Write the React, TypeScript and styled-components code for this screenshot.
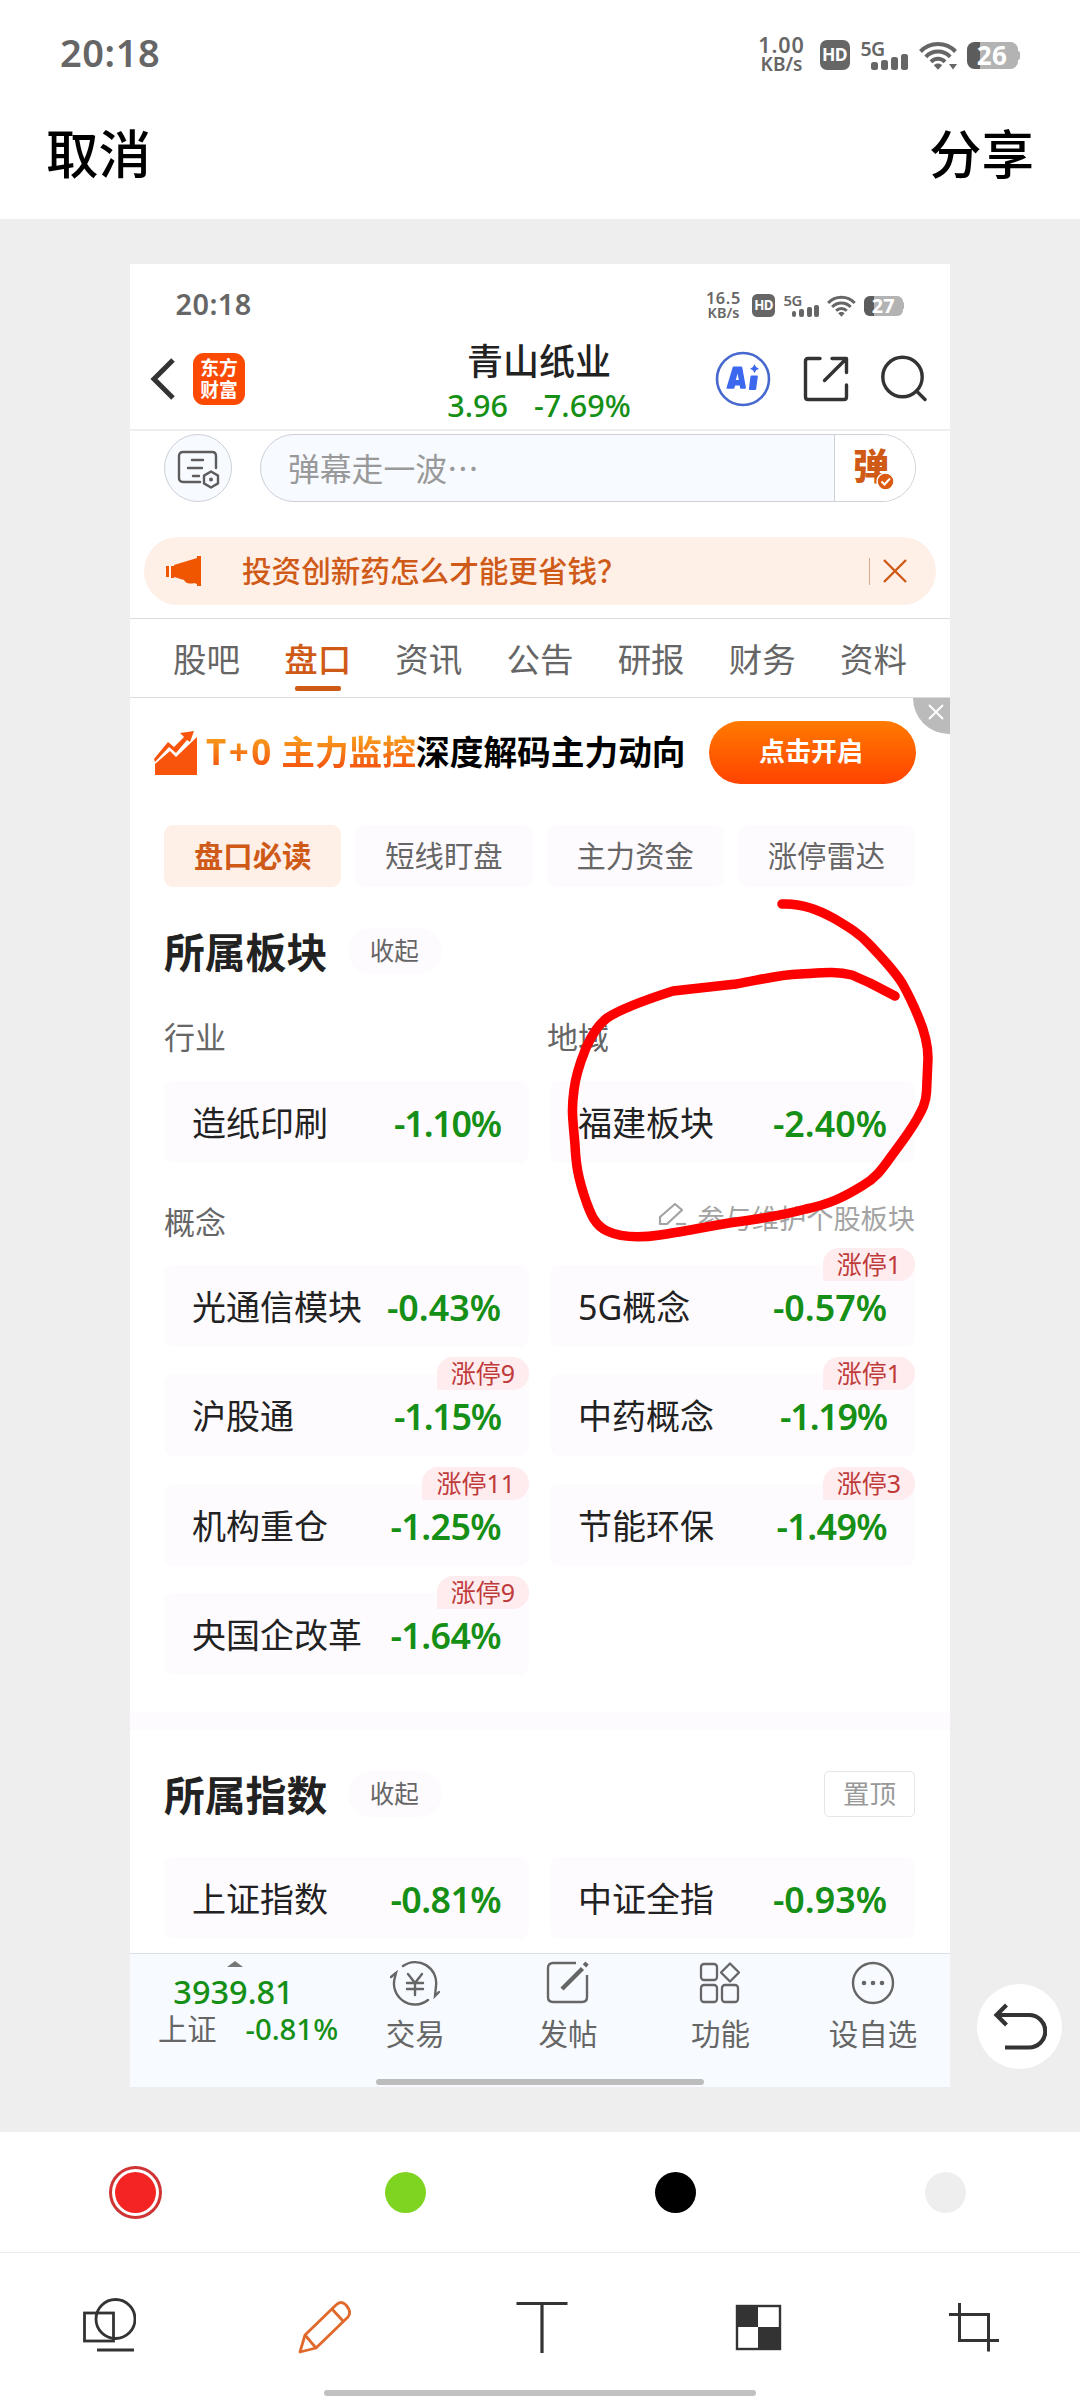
import React from "react";
import styled, { createGlobalStyle } from "styled-components";

const GREEN = "#158f15";
const ORANGE = "#cf5a17";
const INK = "#222";
const GRAY = "#666";

const GlobalStyle = createGlobalStyle`
  * { box-sizing: border-box; }
  body {
    margin: 0;
    background: #fff;
    font-family: "Noto Sans", "Noto Sans CJK SC", sans-serif;
  }
  svg { display: block; flex: none; }
`;

const Screen = styled.div`
  width: 1080px;
  height: 2400px;
  display: flex;
  flex-direction: column;
  background: #fff;
  overflow: hidden;
`;

/* ---------- status bar: every length is in em so that it scales ---------- */

const StatusRow = styled.div<{ $unit: number }>`
  font-size: ${(p) => p.$unit}px;
  height: 8.6em;
  padding: 2.3em 6em 0 6em;
  display: flex;
  align-items: flex-start;
  justify-content: space-between;
  color: #666;
`;
const Clock = styled.span`
  font-size: 3.8em;
  line-height: 1.6;
  height: 1.6em;
  font-weight: 600;
  margin-top: -0.02em;
  letter-spacing: 0.015em;
`;
const StatusIcons = styled.div`
  display: flex;
  align-items: center;
  height: 6.4em;
  line-height: 1;
`;
const Speed = styled.div`
  display: flex;
  flex-direction: column;
  align-items: center;
  width: 5em;
  margin: -0.2em 1.3em 0 0;
  font-weight: 600;
`;
const SpeedValue = styled.span`
  font-size: 2.15em;
  line-height: 1;
  height: 1em;
  letter-spacing: 0.04em;
`;
const SpeedUnit = styled.span`
  font-size: 1.9em;
  line-height: 1;
`;
const HdBadge = styled.div`
  width: 3em;
  height: 3em;
  border-radius: 0.7em;
  background: #666;
  color: #fff;
  display: flex;
  align-items: center;
  justify-content: center;
  margin-right: 1.1em;
`;
const HdText = styled.span`
  font-size: 1.75em;
  font-weight: 700;
  letter-spacing: -0.03em;
`;
const Network = styled.div`
  display: flex;
  height: 3em;
  width: 4.6em;
  margin-right: 1.2em;
  align-items: flex-start;
`;
const NetworkText = styled.span`
  width: 0.55em;
  font-size: 1.95em;
  font-weight: 600;
  line-height: 0.9;
  letter-spacing: -0.03em;
`;
const Bars = styled.div`
  display: flex;
  align-items: flex-end;
  gap: 0.36em;
  height: 3em;
`;
const Bar = styled.i<{ $h: number }>`
  width: 0.64em;
  height: ${(p) => p.$h}em;
  border-radius: 0.25em;
  background: #666;
`;
const WifiIcon = styled.svg`
  width: 3.8em;
  height: 2.9em;
  margin-right: 1em;
`;
const Battery = styled.div`
  display: flex;
  align-items: center;
`;
const BatteryBody = styled.div`
  width: 5.1em;
  height: 2.7em;
  border-radius: 0.75em;
  display: flex;
  align-items: center;
  justify-content: center;
  color: #fff;
  background: linear-gradient(90deg, #5c5c5c 26%, #b3b3b3 26%);
`;
const BatteryText = styled.span`
  font-size: 2.6em;
  font-weight: 700;
  line-height: 1;
  letter-spacing: 0.01em;
`;
const BatteryCap = styled.i`
  width: 0.25em;
  height: 0.9em;
  border-radius: 0 0.3em 0.3em 0;
  background: #b3b3b3;
`;

function StatusBar(props: { unit: number; speed: string; level: string; arrow?: boolean }) {
  return (
    <StatusRow $unit={props.unit}>
      <Clock>20:18</Clock>
      <StatusIcons>
        <Speed>
          <SpeedValue>{props.speed}</SpeedValue>
          <SpeedUnit>KB/s</SpeedUnit>
        </Speed>
        <HdBadge>
          <HdText>HD</HdText>
        </HdBadge>
        <Network>
          <NetworkText>5G</NetworkText>
          <Bars>
            <Bar $h={0.85} />
            <Bar $h={1.05} />
            <Bar $h={1.35} />
            <Bar $h={1.65} />
          </Bars>
        </Network>
        <WifiIcon viewBox="0 0 38 29" fill="none" stroke="#666" strokeWidth="4">
          <path d="M1.5 10.5C11 0.5 27 0.5 36.5 10.5" />
          <path d="M6.8 15.8C13.5 8.8 24.5 8.8 31.2 15.8" />
          <path d="M12 20.8C16 16.8 22 16.8 26 20.8" />
          <path d="M14.8 24.2C17 21.8 21 21.8 23.2 24.2L19 28.8Z" fill="#666" stroke="none" />
          {props.arrow && <path d="M30 23h8l-4 5.5z" fill="#666" stroke="none" />}
        </WifiIcon>
        <Battery>
          <BatteryBody>
            <BatteryText>{props.level}</BatteryText>
          </BatteryBody>
          <BatteryCap />
        </Battery>
      </StatusIcons>
    </StatusRow>
  );
}

/* ---------- editor chrome ---------- */

const EditorActions = styled.header`
  height: 133px;
  padding: 2px 46px 0;
  display: flex;
  justify-content: space-between;
  align-items: center;
  font-size: 52.5px;
  line-height: 70px;
  font-weight: 500;
  color: #000;
`;
const Stage = styled.main`
  position: relative;
  height: 1913px;
  padding-top: 45px;
  background: #eee;
  display: flex;
  justify-content: center;
  align-items: flex-start;
`;
const Doodle = styled.svg`
  position: absolute;
  left: 0;
  top: 0;
  pointer-events: none;
`;
const UndoButton = styled.button`
  position: absolute;
  right: 18px;
  bottom: 63px;
  width: 85px;
  height: 85px;
  border: 0;
  padding: 0;
  border-radius: 50%;
  background: #fff;
  display: grid;
  place-items: center;
`;
const Palette = styled.div`
  height: 121px;
  display: grid;
  grid-template-columns: repeat(4, 1fr);
  place-items: center;
  border-bottom: 1px solid #e9e9e9;
`;
const Swatch = styled.i<{ $color: string; $picked?: boolean }>`
  width: 41px;
  height: 41px;
  border-radius: 50%;
  background: ${(p) => p.$color};
  box-shadow: ${(p) => (p.$picked ? "0 0 0 3px #fff, 0 0 0 6px #cf3434" : "none")};
`;
const Tools = styled.nav`
  height: 137px;
  display: grid;
  grid-template-columns: repeat(5, 1fr);
  justify-items: center;
  padding-top: 43px;
`;
const HomeBar = styled.i<{ $w: number; $c: string }>`
  display: block;
  width: ${(p) => p.$w}px;
  height: 6px;
  border-radius: 3px;
  margin: 0 auto;
  background: ${(p) => p.$c};
`;

/* ---------- stock page ---------- */

const Phone = styled.div`
  width: 820px;
  height: 1823px;
  background: #fff;
  display: flex;
  flex-direction: column;
`;
const NavBar = styled.div`
  height: 102px;
  border-bottom: 2px solid #eee;
  padding: 0 23px 0 20px;
  display: grid;
  grid-template-columns: 1fr auto 1fr;
  align-items: center;
`;
const NavLeft = styled.div`
  display: flex;
  align-items: center;
  gap: 17px;
`;
const NavRight = styled.div`
  display: flex;
  align-items: center;
  justify-content: flex-end;
  gap: 32px;
`;
const Logo = styled.div`
  width: 52px;
  height: 52px;
  border-radius: 11px;
  background: #fc4a03;
  color: #fff;
  font-size: 18.8px;
  line-height: 22px;
  font-weight: 700;
  display: flex;
  flex-direction: column;
  align-items: center;
  justify-content: center;
`;
const StockTitle = styled.div`
  padding: 8px 0 0 1px;
  text-align: center;
`;
const StockName = styled.div`
  font-size: 36px;
  line-height: 47px;
  font-weight: 500;
  color: ${INK};
`;
const StockQuote = styled.div`
  display: flex;
  justify-content: center;
  gap: 26px;
  font-size: 30.6px;
  line-height: 41px;
  height: 43px;
  font-weight: 500;
  color: ${GREEN};
`;

const DanmuRow = styled.div`
  display: flex;
  justify-content: space-between;
  padding: 3px 34px 0;
`;
const DanmuSettings = styled.div`
  width: 68px;
  height: 68px;
  border-radius: 50%;
  border: 1px solid #cdd0d8;
  background: #f7faff;
  display: grid;
  place-items: center;
  padding-top: 2px;
`;
const DanmuInput = styled.div`
  width: 656px;
  height: 68px;
  border-radius: 34px;
  border: 1px solid #cdd0d8;
  background: #f7faff;
  display: flex;
  overflow: hidden;
`;
const Placeholder = styled.span`
  flex: 1;
  padding-left: 27px;
  font-family: "Noto Sans CJK SC", sans-serif;
  font-size: 31.8px;
  line-height: 65px;
  color: #999;
`;
const DanmuSwitch = styled.div`
  width: 81px;
  border-left: 1px solid #cdd0d8;
  background: #fff;
  display: flex;
  padding: 0 0 0 18px;
  color: ${ORANGE};
  font-size: 36px;
  line-height: 64px;
  font-weight: 900;
`;
const DanmuCheck = styled.svg`
  margin: 37px 0 0 -13px;
`;

const Notice = styled.div`
  height: 68px;
  margin: 35px 14px 13px;
  border-radius: 34px;
  background: #feefe7;
  display: flex;
  align-items: center;
  padding: 0 29px 0 22px;
  color: ${ORANGE};
  font-size: 29.6px;
  line-height: 40px;
`;
const NoticeText = styled.span`
  flex: 1;
  padding-left: 41px;
  padding-bottom: 1px;
  font-weight: 500;
`;
const NoticeRule = styled.i`
  width: 1px;
  height: 27px;
  margin-right: 13px;
  background: #d9a98c;
`;

const Tabs = styled.nav`
  height: 80px;
  border-top: 1px solid #dcdcdc;
  border-bottom: 1px solid #dcdcdc;
  padding: 0 21px;
  display: grid;
  grid-template-columns: repeat(7, 1fr);
`;
const Tab = styled.div<{ $on?: boolean }>`
  display: flex;
  flex-direction: column;
  align-items: center;
  font-size: 33.5px;
  line-height: 46px;
  padding-top: 17px;
  color: ${(p) => (p.$on ? ORANGE : GRAY)};
  font-weight: ${(p) => (p.$on ? 500 : 400)};
  &::after {
    content: "";
    width: 46px;
    height: 5px;
    margin-top: 4px;
    border-radius: 2px;
    background: ${(p) => (p.$on ? ORANGE : "transparent")};
  }
`;

const Promo = styled.div`
  position: relative;
  height: 127px;
  padding: 23px 34px 41px 23px;
  display: flex;
  align-items: center;
`;
const PromoText = styled.div`
  flex: 1;
  margin: -2px 0 0 7px;
  display: flex;
  font-size: 33.7px;
  line-height: 46px;
  font-weight: 700;
  color: #000;
  white-space: nowrap;
`;
const PromoHot = styled.span`
  width: 210px;
  display: flex;
  justify-content: space-between;
  color: transparent;
  background: linear-gradient(180deg, #f79a1c 20%, #f45a10 80%);
  background-clip: text;
  -webkit-background-clip: text;
`;
const PromoPlus = styled.span`
  font-size: 35px;
  letter-spacing: 2.5px;
`;
const PromoButton = styled.div`
  width: 207px;
  height: 63px;
  border-radius: 32px;
  background: linear-gradient(180deg, #ff7a00, #ff4300);
  color: #fff;
  font-size: 26px;
  font-weight: 700;
  line-height: 61px;
  text-align: center;
  padding-right: 3px;
`;
const PromoClose = styled.div`
  position: absolute;
  right: 0;
  top: 0;
  width: 37px;
  height: 36px;
  border-bottom-left-radius: 36px;
  background: #bbb;
  display: grid;
  place-items: center;
  padding: 0 0 8px 9px;
`;

const Body = styled.section`
  padding: 0 35px 0 34px;
`;
const Chips = styled.div`
  display: grid;
  grid-template-columns: repeat(4, 1fr);
  gap: 14px;
  margin-bottom: 41px;
`;
const Chip = styled.div<{ $on?: boolean }>`
  height: 62px;
  border-radius: 9px;
  background: ${(p) => (p.$on ? "#feefe7" : "#fefbff")};
  color: ${(p) => (p.$on ? ORANGE : GRAY)};
  font-weight: ${(p) => (p.$on ? 600 : 400)};
  font-size: 29.3px;
  line-height: 63px;
  text-align: center;
`;
const SectionHead = styled.div`
  display: flex;
  align-items: center;
  height: 46px;
`;
const SectionTitle = styled.h2`
  margin: 2px 21px 0 0;
  font-size: 40.8px;
  line-height: 46px;
  font-weight: 600;
  color: ${INK};
`;
const Fold = styled.span`
  width: 94px;
  height: 46px;
  border-radius: 23px;
  background: #fefbff;
  color: ${GRAY};
  font-size: 24.5px;
  line-height: 46px;
  text-align: center;
  padding-right: 2px;
`;
const PinTop = styled.span`
  margin-left: auto;
  width: 91px;
  height: 46px;
  border: 1px solid #e6e6e6;
  border-radius: 5px;
  color: #999;
  font-size: 26.5px;
  line-height: 45px;
  text-align: center;
`;
const LabelRow = styled.div<{ $top: number; $bottom: number }>`
  margin: ${(p) => p.$top}px 0 ${(p) => p.$bottom}px;
  height: 46px;
  display: grid;
  grid-template-columns: 1fr 1fr;
  column-gap: 15px;
  font-size: 31px;
  line-height: 45px;
  color: ${GRAY};
`;
const EditLink = styled.span`
  display: flex;
  justify-content: flex-end;
  gap: 10px;
  padding-top: 2px;
  font-size: 27.2px;
  line-height: 34px;
  color: #a3a3a3;
  white-space: nowrap;
`;
const Cards = styled.div`
  display: grid;
  grid-template-columns: 1fr 1fr;
  gap: 27.4px 21px;
`;
const Card = styled.div`
  position: relative;
  height: 82px;
  border-radius: 9px;
  background: #fefbff;
  display: flex;
  justify-content: space-between;
  padding: 1px 28px 0;
  line-height: 82px;
  white-space: nowrap;
`;
const CardName = styled.span`
  font-size: 34px;
  color: ${INK};
`;
const CardChange = styled.span<{ $ones: number }>`
  font-size: 35.8px;
  font-weight: 600;
  color: ${GREEN};
  letter-spacing: ${(p) => -0.6 * p.$ones}px;
`;
const LimitTag = styled.span`
  position: absolute;
  right: 0;
  top: -17px;
  height: 33px;
  padding: 0 14px;
  border-radius: 16px 16px 16px 0;
  background: #feecee;
  color: #bf3a3a;
  font-size: 25px;
  line-height: 33px;
`;
const Band = styled.div`
  height: 18px;
  margin: 37px 0 41px;
  background: #fefbff;
`;
const IndexHead = styled.div`
  margin-bottom: 40px;
`;

const Dock = styled.footer`
  margin-top: auto;
  height: 134px;
  border-top: 1px solid #dcdfe4;
  background: #f7faff;
`;
const DockRow = styled.div`
  height: 125px;
  display: grid;
  grid-template-columns: 209px repeat(4, 152.6px);
`;
const DockIndex = styled.div`
  display: flex;
  flex-direction: column;
  align-items: center;
  padding-top: 7px;
`;
const IndexValue = styled.span`
  font-size: 32.5px;
  line-height: 36px;
  margin: 7px 2px 0 0;
  color: ${GREEN};
  font-weight: 500;
`;
const IndexChange = styled.div`
  display: flex;
  gap: 29px;
  font-size: 29.3px;
  line-height: 39px;
  color: ${GRAY};
  padding-left: 27px;
  white-space: nowrap;
`;
const Down = styled.span`
  color: ${GREEN};
  font-weight: 500;
`;
const DockItem = styled.div`
  display: flex;
  flex-direction: column;
  align-items: center;
  padding-top: 6px;
  font-size: 29.5px;
  line-height: 40px;
  color: ${GRAY};
  gap: 8px;
`;

type Item = { name: string; change: string; tag?: string };

const industry: Item[] = [
  { name: "造纸印刷", change: "-1.10%" },
  { name: "福建板块", change: "-2.40%" },
];
const concepts: Item[] = [
  { name: "光通信模块", change: "-0.43%" },
  { name: "5G概念", change: "-0.57%", tag: "涨停1" },
  { name: "沪股通", change: "-1.15%", tag: "涨停9" },
  { name: "中药概念", change: "-1.19%", tag: "涨停1" },
  { name: "机构重仓", change: "-1.25%", tag: "涨停11" },
  { name: "节能环保", change: "-1.49%", tag: "涨停3" },
  { name: "央国企改革", change: "-1.64%", tag: "涨停9" },
];
const indices: Item[] = [
  { name: "上证指数", change: "-0.81%" },
  { name: "中证全指", change: "-0.93%" },
];

function CardGrid({ items }: { items: Item[] }) {
  return (
    <Cards>
      {items.map((it) => (
        <Card key={it.name}>
          <CardName>{it.name}</CardName>
          <CardChange $ones={it.change.split("1").length - 1}>{it.change}</CardChange>
          {it.tag && <LimitTag>{it.tag}</LimitTag>}
        </Card>
      ))}
    </Cards>
  );
}

const tabs = ["股吧", "盘口", "资讯", "公告", "研报", "财务", "资料"];
const chips = ["盘口必读", "短线盯盘", "主力资金", "涨停雷达"];

function StockPage() {
  return (
    <Phone>
      <StatusBar unit={7.593} speed="16.5" level="27" />
      <NavBar>
        <NavLeft>
          <svg width="26" height="44" viewBox="0 0 26 44" fill="none" stroke="#333" strokeWidth="5">
            <path d="M23 3L4 22L23 41" />
          </svg>
          <Logo>
            <span>东方</span>
            <span>财富</span>
          </Logo>
        </NavLeft>
        <StockTitle>
          <StockName>青山纸业</StockName>
          <StockQuote>
            <span>3.96</span>
            <span>-7.69%</span>
          </StockQuote>
        </StockTitle>
        <NavRight>
          <svg width="56" height="56" viewBox="0 0 56 56">
            <circle cx="28" cy="28" r="26" fill="none" stroke="#4668cf" strokeWidth="2.6" />
            <path
              d="M18.5 15.5h7.6q1 0 1.2 1l3.6 20q.2 1.3-1 1.3h-4.6l-.6-3.4h-4.5l-1.2 3.4h-6.8q-1 0-.6-1.2l6-20q.3-1.1 .9-1.1zM22.6 22.5l-1.8 6.6h3z"
              fill="#3c68f0"
              fillRule="evenodd"
            />
            <path d="M36.6 24.5h5.4q1 0 .8 1l-1.6 12.2q-.1 1.3-1.2 1.3h-5.2q-1 0-.9-1l1.5-12.2q.1-1.3 1.2-1.3z" fill="#3c68f0" />
            <path d="M39.5 13.3q1 3.4 4.4 4.4q-3.4 1-4.4 4.4q-1-3.4-4.4-4.4q3.4-1 4.4-4.4z" fill="#3c68f0" />
          </svg>
          <svg width="46" height="46" viewBox="0 0 46 46" fill="none" stroke="#333" strokeWidth="3.400" strokeLinecap="round" strokeLinejoin="round">
            <path d="M17 2.500H5Q2.500 2.500 2.500 5V41Q2.500 43.500 5 43.500H41Q43.500 43.500 43.500 41V29" />
            <path d="M29 2.500H43.500V16.500M43.500 2.500L21.500 24.500" />
          </svg>
          <svg width="46" height="48" viewBox="0 0 46 48" fill="none" stroke="#333" strokeWidth="3.400" strokeLinecap="round">
            <circle cx="21.500" cy="22" r="19.700" />
            <path d="M35.500 36L44 44.500" />
          </svg>
        </NavRight>
      </NavBar>

      <DanmuRow>
        <DanmuSettings>
          <svg width="44" height="40" viewBox="0 0 44 40" fill="none" stroke="#5d5d5d" strokeWidth="2.4" strokeLinecap="round">
            <path d="M24 33H7Q3 33 3 29V7Q3 3 7 3H36Q40 3 40 7V19" />
            <path d="M16 11H27M12 19H26M17 27H23" />
            <path d="M35 22.500L42 26.600V34.400L35 38.500L28 34.400V26.600Z" strokeLinejoin="round" />
            <circle cx="35" cy="30.500" r="2" fill="#5d5d5d" stroke="none" />
          </svg>
        </DanmuSettings>
        <DanmuInput>
          <Placeholder>弹幕走一波⋯</Placeholder>
          <DanmuSwitch>
            弹
            <DanmuCheck width="19" height="19" viewBox="0 0 19 19">
              <circle cx="9.500" cy="9.500" r="8.500" fill="#dd5a12" stroke="#fff" strokeWidth="1.500" />
              <path d="M5.500 9.500L8.500 12.500L14 6.500" fill="none" stroke="#fff" strokeWidth="2" />
            </DanmuCheck>
          </DanmuSwitch>
        </DanmuInput>
      </DanmuRow>

      <Notice>
        <svg width="35" height="30" viewBox="0 0 35 30" fill="#f05500">
          <path d="M0 10h3v11h-3zM5 10h3v12h-3z" />
          <path d="M8 9L31 2V0H35V30H31V28L28 27Q26 28 21 27Q19 26 18 24L8 21Z" />
        </svg>
        <NoticeText>投资创新药怎么才能更省钱？</NoticeText>
        <NoticeRule />
        <svg width="24" height="24" viewBox="0 0 24 24" fill="none" stroke={ORANGE} strokeWidth="2.400">
          <path d="M1 1L23 23M23 1L1 23" />
        </svg>
      </Notice>

      <Tabs>
        {tabs.map((t) => (
          <Tab key={t} $on={t === "盘口"}>
            {t}
          </Tab>
        ))}
      </Tabs>

      <Promo>
        <svg width="46" height="44" viewBox="0 0 46 44" fill="#f9540c">
          <path d="M2 44V33L17 20L23 26L44 6V44Z" />
          <path d="M1 28L15 11L21 16L31 6L27 2L41 0L37 11L34 9L23 22L16 16L2 31Z" />
        </svg>
        <PromoText>
          <PromoHot>
            <PromoPlus>T+0</PromoPlus>
            <span>主力监控</span>
          </PromoHot>
          <span>深度解码主力动向</span>
        </PromoText>
        <PromoButton>点击开启</PromoButton>
        <PromoClose>
          <svg width="16" height="16" viewBox="0 0 16 16" stroke="#fff" strokeWidth="1.800">
            <path d="M1 1L15 15M15 1L1 15" />
          </svg>
        </PromoClose>
      </Promo>

      <Body>
        <Chips>
          {chips.map((c, i) => (
            <Chip key={c} $on={i === 0}>
              {c}
            </Chip>
          ))}
        </Chips>
        <SectionHead>
          <SectionTitle>所属板块</SectionTitle>
          <Fold>收起</Fold>
        </SectionHead>
        <LabelRow $top={41} $bottom={20}>
          <span>行业</span>
          <span>地域</span>
        </LabelRow>
        <CardGrid items={industry} />
        <LabelRow $top={36.5} $bottom={19}>
          <span>概念</span>
          <EditLink>
            <svg width="29" height="26" viewBox="0 0 29 26" fill="none" stroke="#a3a3a3" strokeWidth="2.200" strokeLinejoin="round">
              <path d="M2 15L17 2L24 8L9 22H2Z" />
              <path d="M18 22H28" />
            </svg>
            参与维护个股板块
          </EditLink>
        </LabelRow>
        <CardGrid items={concepts} />
      </Body>
      <Band />
      <Body>
        <IndexHead>
          <SectionHead>
            <SectionTitle>所属指数</SectionTitle>
            <Fold>收起</Fold>
            <PinTop>置顶</PinTop>
          </SectionHead>
        </IndexHead>
        <CardGrid items={indices} />
      </Body>

      <Dock>
        <DockRow>
          <DockIndex>
            <svg width="16" height="6" viewBox="0 0 16 6">
              <path d="M0 6L8 0L16 6Z" fill="#777" />
            </svg>
            <IndexValue>3939.81</IndexValue>
            <IndexChange>
              <span>上证</span>
              <Down>-0.81%</Down>
            </IndexChange>
          </DockIndex>
          <DockItem>
            <svg width="50" height="46" viewBox="0 0 50 46" fill="none" stroke={GRAY} strokeWidth="2.400" strokeLinecap="round">
              <path d="M13 6A21 21 0 0 1 46 26L45 36L49 32" />
              <path d="M38 40A21 21 0 0 1 5 17L6 13L1 17" />
              <path d="M18 14L25 23L32 14M25 23V35M17 23H33M17 29H33" />
            </svg>
            <span>交易</span>
          </DockItem>
          <DockItem>
            <svg width="46" height="46" viewBox="0 0 46 46" fill="none" stroke={GRAY} strokeWidth="2.400">
              <path d="M31 3H8Q3 3 3 8V37Q3 42 8 42H37Q42 42 42 37V15" />
              <path d="M37.500 8.500L17 29" strokeWidth="4.500" />
              <path d="M42 3L39.500 6" strokeWidth="4.500" />
            </svg>
            <span>发帖</span>
          </DockItem>
          <DockItem>
            <svg width="46" height="46" viewBox="0 0 46 46" fill="none" stroke={GRAY} strokeWidth="2.300" strokeLinejoin="round">
              <rect x="4" y="4" width="16" height="16" rx="3" />
              <path d="M33 3.500L42 12.500L33 21.500L24 12.500Z" />
              <rect x="4" y="25" width="16" height="17" rx="3" />
              <rect x="25" y="25" width="16" height="17" rx="3" />
            </svg>
            <span>功能</span>
          </DockItem>
          <DockItem>
            <svg width="46" height="46" viewBox="0 0 46 46" fill={GRAY}>
              <circle cx="23" cy="23" r="20" fill="none" stroke={GRAY} strokeWidth="2.400" />
              <circle cx="14" cy="23" r="2.300" />
              <circle cx="23" cy="23" r="2.300" />
              <circle cx="32" cy="23" r="2.300" />
            </svg>
            <span>设自选</span>
          </DockItem>
        </DockRow>
        <HomeBar $w={328} $c="#bcbcbc" />
      </Dock>
    </Phone>
  );
}

export default function App() {
  return (
    <>
      <GlobalStyle />
      <Screen>
        <StatusBar unit={10} speed="1.00" level="26" arrow />
        <EditorActions>
          <span>取消</span>
          <span>分享</span>
        </EditorActions>
        <Stage>
          <StockPage />
          <Doodle width="1080" height="1913" viewBox="0 219 1080 1913" fill="none" stroke="#fe0000" strokeWidth="9.500" strokeLinecap="round" strokeLinejoin="round">
            <path d="M782 904C800 903 816 908 835 919C850 928 860 934 870 945C884 960 894 970 902 983C910 997 913 1004 918 1016C924 1030 928 1045 928 1058L926.500 1092C926 1103 922 1110 917 1119C909 1133 901 1143 890 1158C882 1169 876 1178 862 1186C844 1197 830 1204 806 1209C784 1215 760 1219 729 1223C705 1227 680 1232 660 1235C640 1238 622 1238 607 1231C594 1225 590 1212 586 1201C578 1178 576 1165 575 1145C573 1120 571 1112 574 1090C576 1072 582 1058 586 1048C592 1034 598 1025 607 1018C622 1008 645 1000 673 991L736 984C756 981 775 975 800 974C820 973 836 971 852 975L870 983L895 996" />
          </Doodle>
          <UndoButton>
            <svg width="54" height="48" viewBox="0 0 54 48" fill="none" stroke="#333" strokeWidth="4.200">
              <path d="M3 12H36A16 16 0 0 1 36 44.500H12" />
              <path d="M13.500 2L3.500 12L13.500 22" />
            </svg>
          </UndoButton>
        </Stage>
        <Palette>
          <Swatch $color="#f42424" $picked />
          <Swatch $color="#7fd321" />
          <Swatch $color="#000" />
          <Swatch $color="#eee" />
        </Palette>
        <Tools>
          <svg width="56" height="60" viewBox="80 2295 56 60" fill="none" stroke="#333" strokeWidth="2.800">
            <rect x="84.500" y="2312" width="29" height="28" />
            <circle cx="115.500" cy="2318" r="19.500" />
            <path d="M97 2349H134" strokeWidth="3.200" />
          </svg>
          <svg width="56" height="60" viewBox="296 2295 56 60" fill="none" stroke="#e0692b" strokeWidth="2.800" strokeLinejoin="round">
            <path d="M300 2351L305 2334L336 2304Q341 2299 346 2304Q352 2311 348 2316L316 2347Z" />
            <path d="M305 2334L316 2347M332 2308L343 2320" />
          </svg>
          <svg width="56" height="60" viewBox="512 2295 56 60" fill="none" stroke="#333" strokeWidth="3.200">
            <path d="M516.500 2302.500H567.500M542 2302.500V2352" />
          </svg>
          <svg width="56" height="60" viewBox="728 2295 56 60">
            <rect x="737" y="2305" width="43" height="43" fill="#fff" stroke="#333" strokeWidth="2.400" />
            <path d="M737 2305h21v21h-21zM758 2326h22v22h-22z" fill="#333" />
          </svg>
          <svg width="56" height="60" viewBox="944 2295 56 60" fill="none" stroke="#333" strokeWidth="3">
            <path d="M959.500 2302V2339.500H999M949 2313.500H988.500V2350.500" />
          </svg>
        </Tools>
        <HomeBar $w={432} $c="#c1c1c1" />
      </Screen>
    </>
  );
}
